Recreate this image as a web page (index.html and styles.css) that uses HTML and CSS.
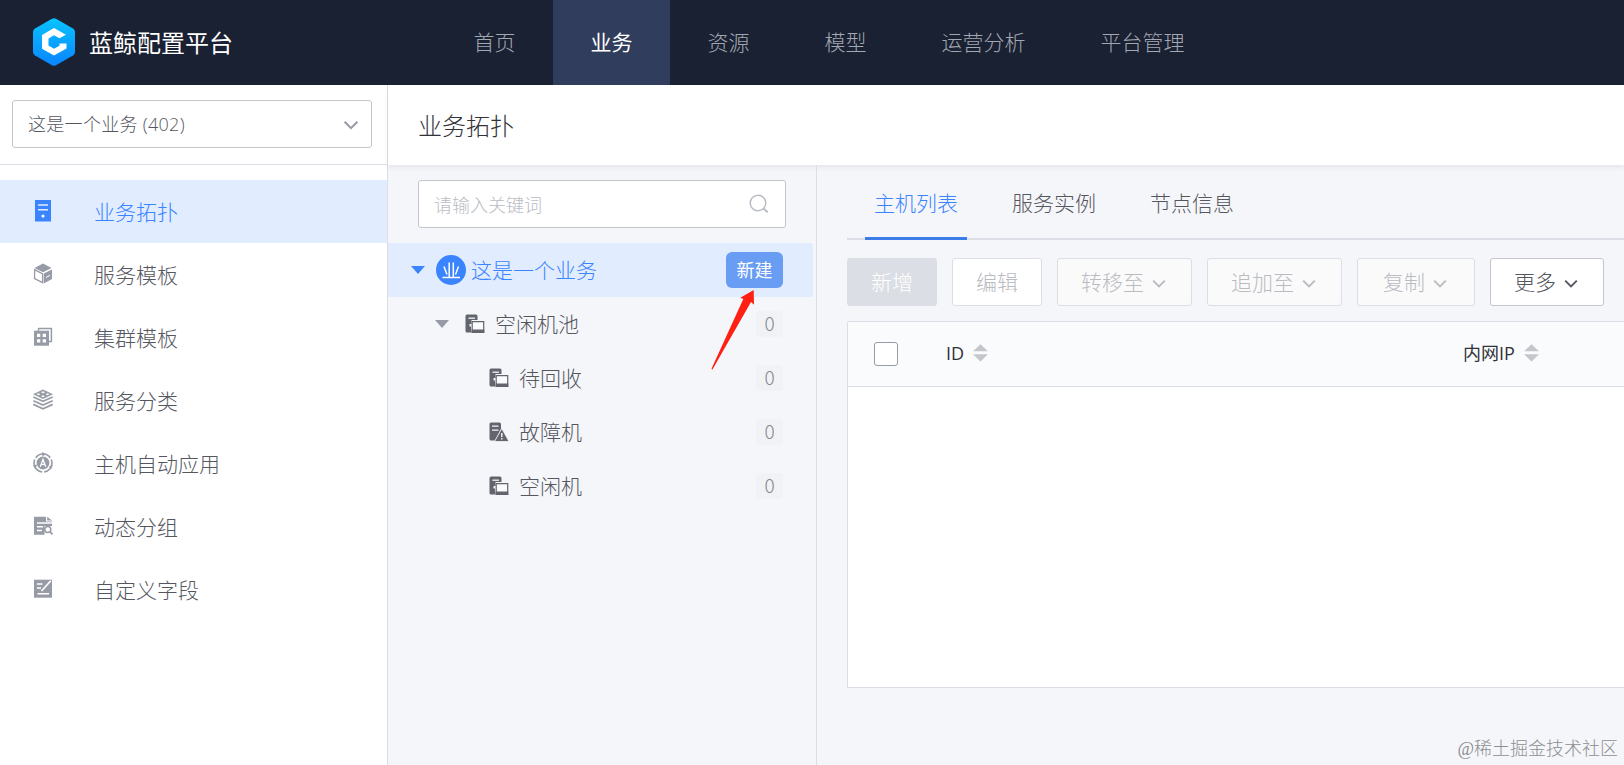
FILE: index.html
```html
<!DOCTYPE html>
<html lang="zh-CN">
<head>
  <meta charset="UTF-8">
  <title>蓝鲸配置平台</title>
  <link rel="stylesheet" href="styles.css">
</head>
<body>
  <svg class="sprite" aria-hidden="true">
    <symbol id="chevron" viewBox="0 0 14 10">
      <path d="M1.2 1.6 L7 7.4 L12.8 1.6" fill="none" stroke="currentColor" stroke-width="1.900"/>
    </symbol>
    <symbol id="sort" viewBox="0 0 15 18">
      <path d="M7.5 0.3 L15 7.3 H0 Z M0 10.3 H15 L7.5 17.5 Z" fill="currentColor"/>
    </symbol>
    <symbol id="idle" viewBox="0 0 20 20">
      <path d="M2 0.5 H11 Q12.5 0.5 12.5 2 V6 H6.5 V10 H4.5 V12.500 H6 V18.500 H2 Q0.500 18.500 0.500 17 V2 Q0.500 0.500 2 0.500 Z" fill="currentColor"/>
      <path d="M3.500 4.200 H10" stroke="#f5f6fa" stroke-width="1.300"/>
      <path d="M7.200 7.700 H18.700 V18.300 H7.200 Z" fill="#fafbfd" stroke="currentColor" stroke-width="1.200"/>
      <path d="M6.600 15.500 H19.300 V19 H6.600 Z" fill="currentColor"/>
    </symbol>
    <symbol id="fault" viewBox="0 0 20 20">
      <path d="M2 0.500 H10.500 Q12 0.500 12 2 V7 L6 18.500 H2 Q0.500 18.500 0.500 17 V2 Q0.500 0.500 2 0.500 Z" fill="currentColor"/>
      <path d="M3 4.200 H9.500 M3 8.200 H9.500" stroke="#f5f6fa" stroke-width="1.200"/>
      <path d="M12.800 6.500 L20 19.500 H5.500 Z" fill="currentColor" stroke="#f5f6fa" stroke-width="0.800"/>
      <path d="M12.800 11 V15 M12.800 16 V17.600" stroke="#f5f6fa" stroke-width="1.400"/>
    </symbol>
  </svg>

  <header class="header">
    <div class="brand">
      <svg class="logo" viewBox="0 0 42 48">
        <defs>
          <linearGradient id="logoFill" x1="0" y1="0" x2="0" y2="1">
            <stop offset="0" stop-color="#08c4ff"/>
            <stop offset="1" stop-color="#0a84ff"/>
          </linearGradient>
        </defs>
        <path d="M19 0.800 Q21 -0.300 23 0.800 L40 10.500 Q42 11.700 42 14 V34 Q42 36.300 40 37.500 L23 47.200 Q21 48.300 19 47.200 L2 37.500 Q0 36.300 0 34 V14 Q0 11.700 2 10.500 Z" fill="url(#logoFill)"/>
        <path d="M21 10 L33 16.800 L26.500 20.300 L21 17.300 L15.500 20.500 V27.500 L21 30.700 L26.500 27.700 V25.500 L33.500 25.500 V30.500 L21 37.500 L9 30.700 V17 Z" fill="#fff"/>
      </svg>
      <span class="brand-name">蓝鲸配置平台</span>
    </div>
    <nav class="nav">
      <a class="nav-item">首页</a>
      <a class="nav-item active">业务</a>
      <a class="nav-item">资源</a>
      <a class="nav-item">模型</a>
      <a class="nav-item">运营分析</a>
      <a class="nav-item">平台管理</a>
    </nav>
  </header>

  <div class="layout">
    <aside class="sidebar">
      <div class="biz">
        <div class="biz-select">
          <span>这是一个业务 (402)</span>
          <svg class="biz-arrow"><use href="#chevron"/></svg>
        </div>
      </div>
      <ul class="menu">
        <li class="menu-item active">
          <svg class="menu-icon" viewBox="0 0 20 22">
            <path d="M2 0 H18 V21.500 H2 Z" fill="currentColor"/>
            <path d="M5 5 H15 M5 9.700 H15" stroke="#e1ecff" stroke-width="1.400"/>
            <circle cx="10" cy="16" r="1.600" fill="#fff"/>
          </svg>
          <span>业务拓扑</span>
        </li>
        <li class="menu-item">
          <svg class="menu-icon" viewBox="0 0 20 22">
            <path d="M10 0.500 L18.500 5 L10 9.300 L1.500 5 Z M10.800 10.600 L19 6.400 V16 L10.800 20.500 Z" fill="currentColor"/>
            <path d="M1.600 6.700 L9.600 10.800 V19.700 L1.600 15.600 Z" fill="#fff" stroke="currentColor" stroke-width="1.300"/>
            <path d="M13 14.500 L17 12.300" stroke="#fff" stroke-width="1"/>
          </svg>
          <span>服务模板</span>
        </li>
        <li class="menu-item">
          <svg class="menu-icon" viewBox="0 0 20 22">
            <path d="M5.500 2.500 H18.400 V15.500" fill="none" stroke="currentColor" stroke-width="1.500"/>
            <path d="M5.500 2 V5 M15.500 15.500 H19" stroke="currentColor" stroke-width="1.300"/>
            <path d="M1 4.700 H16 V19.700 H1 Z" fill="currentColor"/>
            <path d="M4 7.700 H7.300 V11 H4 Z M9.700 7.700 H13 V11 H9.700 Z M4 13.300 H7.300 V16.600 H4 Z M9.700 13.300 H13 V16.600 H9.700 Z" fill="#fff"/>
          </svg>
          <span>集群模板</span>
        </li>
        <li class="menu-item">
          <svg class="menu-icon" viewBox="0 0 20 22">
            <path d="M10 0.500 L20 5.300 L10 10 L0 5.300 Z" fill="currentColor"/>
            <path d="M10 2.200 L12 3.200 L10 4.200 L8 3.200 Z M5.500 4.300 L7.500 5.300 L5.500 6.300 L3.500 5.300 Z M14.500 4.300 L16.500 5.300 L14.500 6.300 L12.500 5.300 Z M10 6.300 L12 7.300 L10 8.300 L8 7.300 Z" fill="#fff"/>
            <path d="M0.300 8 L10 12.300 L19.700 8 M0.300 11.700 L10 16 L19.700 11.700 M0.300 15.400 L10 19.700 L19.700 15.400" fill="none" stroke="currentColor" stroke-width="1.700"/>
          </svg>
          <span>服务分类</span>
        </li>
        <li class="menu-item">
          <svg class="menu-icon" viewBox="0 0 20 22">
            <circle cx="10" cy="11" r="9" fill="none" stroke="currentColor" stroke-width="1.600" stroke-dasharray="16.850 2" stroke-dashoffset="4"/>
            <circle cx="10" cy="11" r="6.400" fill="currentColor"/>
            <path d="M9 0 L13 2 L9.500 4.500 Z M0 13.500 L4 12.500 L2.500 17 Z M19.800 13 L16 14.500 L18 17.500 Z" fill="currentColor"/>
            <path d="M7.300 14.700 L10 7.300 L12.700 14.700 M8.300 12.400 H11.700" fill="none" stroke="#fff" stroke-width="1.300"/>
          </svg>
          <span>主机自动应用</span>
        </li>
        <li class="menu-item">
          <svg class="menu-icon" viewBox="0 0 20 22">
            <path d="M1 1.700 H13 V6.500 H19 V19.700 H1 Z" fill="currentColor"/>
            <path d="M14.200 1.700 L19 5.600 H14.200 Z" fill="currentColor"/>
            <path d="M4 8 H19 M4 11.700 H10 M4 15.500 H9" stroke="#fff" stroke-width="1.400"/>
            <path d="M11.500 20 V11 H20 V20 Z" fill="#fff"/>
            <circle cx="14.800" cy="14.500" r="3" fill="none" stroke="currentColor" stroke-width="1.500"/>
            <path d="M16.800 16.700 L19.500 19.500" stroke="currentColor" stroke-width="1.700"/>
          </svg>
          <span>动态分组</span>
        </li>
        <li class="menu-item">
          <svg class="menu-icon" viewBox="0 0 20 22">
            <path d="M1 1.700 H19 V19.700 H1 Z" fill="currentColor"/>
            <path d="M4 6 H9.500 M4 10 H8 M4.500 15.700 H16" stroke="#fff" stroke-width="1.400"/>
            <path d="M8.500 13 L17.800 2.800" stroke="#fff" stroke-width="1.700"/>
          </svg>
          <span>自定义字段</span>
        </li>
      </ul>
    </aside>

    <main class="main">
      <div class="page-title">业务拓扑</div>
      <div class="content">
        <section class="tree">
          <div class="search">
            <span>请输入关键词</span>
            <svg class="search-icon" viewBox="0 0 20 20">
              <circle cx="9" cy="9" r="7.800" fill="none" stroke="currentColor" stroke-width="1.500"/>
              <path d="M14.500 14.500 L18.700 18.300" stroke="currentColor" stroke-width="2"/>
            </svg>
          </div>
          <div class="node root">
            <i class="caret"></i>
            <svg class="biz-icon" viewBox="0 0 30 30">
              <circle cx="15" cy="15" r="15" fill="#3a84ff"/>
              <path d="M6.500 22.500 H24 M13.200 7.500 V22 M17.300 7.500 V22 M8 11.500 L11 19.500 M22.500 11.500 L19.500 19.500" fill="none" stroke="#fff" stroke-width="1.500"/>
            </svg>
            <span class="node-name">这是一个业务</span>
            <button class="create">新建</button>
          </div>
          <div class="node pool">
            <i class="caret"></i>
            <svg class="node-icon"><use href="#idle"/></svg>
            <span class="node-name">空闲机池</span>
            <span class="count">0</span>
          </div>
          <div class="node leaf">
            <svg class="node-icon"><use href="#idle"/></svg>
            <span class="node-name">待回收</span>
            <span class="count">0</span>
          </div>
          <div class="node leaf">
            <svg class="node-icon"><use href="#fault"/></svg>
            <span class="node-name">故障机</span>
            <span class="count">0</span>
          </div>
          <div class="node leaf">
            <svg class="node-icon"><use href="#idle"/></svg>
            <span class="node-name">空闲机</span>
            <span class="count">0</span>
          </div>
          <svg class="pointer" viewBox="0 0 44 81">
            <path d="M42.700 0 L43 14.700 L40 12 L1.300 79.700 L0.500 78.800 L32.300 9 L29.300 7.700 Z" fill="#ff1f13"/>
          </svg>
        </section>

        <section class="detail">
          <div class="tabs">
            <a class="tab active">主机列表</a>
            <a class="tab">服务实例</a>
            <a class="tab">节点信息</a>
          </div>
          <div class="toolbar">
            <button class="btn primary">新增</button>
            <button class="btn plain">编辑</button>
            <button class="btn">转移至<svg class="btn-arrow"><use href="#chevron"/></svg></button>
            <button class="btn">追加至<svg class="btn-arrow"><use href="#chevron"/></svg></button>
            <button class="btn copy">复制<svg class="btn-arrow"><use href="#chevron"/></svg></button>
            <button class="btn more">更多<svg class="btn-arrow"><use href="#chevron"/></svg></button>
          </div>
          <div class="table">
            <div class="table-head">
              <span class="checkbox"></span>
              <span class="col col-id">ID<svg class="sort"><use href="#sort"/></svg></span>
              <span class="col">内网IP<svg class="sort"><use href="#sort"/></svg></span>
            </div>
          </div>
        </section>
      </div>
    </main>
  </div>
  <div class="watermark">@稀土掘金技术社区</div>
</body>
</html>
```
FILE: styles.css
```css
* {
  box-sizing: border-box;
}

body {
  margin: 0;
  height: 765px;
  overflow: hidden;
  position: relative;
  display: flex;
  flex-direction: column;
  font-family: "Open Sans", "Noto Sans CJK SC", sans-serif;
  font-weight: 300;
  font-size: 21px;
  line-height: 30px;
  color: #55575f;
  background: #f5f6fa;
}

.sprite {
  position: absolute;
  width: 0;
  height: 0;
}

svg {
  display: block;
  flex-shrink: 0;
}

button {
  font: inherit;
  padding: 0;
}

/* header */
.header {
  height: 85px;
  flex-shrink: 0;
  display: flex;
  background: #1a2133;
}

.brand {
  width: 436px;
  padding-left: 33px;
  display: flex;
  align-items: center;
}

.logo {
  width: 42px;
  height: 48px;
  margin-bottom: 1px;
}

.brand-name {
  margin-left: 14px;
  font-size: 24px;
  font-weight: 400;
  color: #fff;
}

.nav {
  display: flex;
}

.nav-item {
  padding: 0 37.5px;
  line-height: 85px;
  color: #a3a7b1;
}

.nav-item.active {
  background: #303d5c;
  color: #fff;
  font-weight: 400;
}

/* sidebar */
.layout {
  flex: 1;
  display: flex;
  min-height: 0;
}

.sidebar {
  width: 388px;
  flex-shrink: 0;
  background: #fff;
  border-right: 1px solid #dcdee5;
}

.biz {
  height: 80px;
  padding: 15px 15px 0 12px;
  border-bottom: 1px solid #dcdee5;
}

.biz-select {
  height: 48px;
  padding: 0 12px 0 15px;
  display: flex;
  align-items: center;
  justify-content: space-between;
  border: 1px solid #c4c6cc;
  border-radius: 3px;
  font-size: 18px;
  letter-spacing: 0.3px;
}

.biz-arrow {
  width: 16px;
  height: 11px;
  margin-top: 2px;
  color: #979ba5;
}

.menu {
  list-style: none;
  margin: 15px 0 0;
  padding: 0;
}

.menu-item {
  height: 63px;
  padding-left: 33px;
  display: flex;
  align-items: center;
}

.menu-item.active {
  background: #e1ecff;
  color: #3a84ff;
}

.menu-icon {
  width: 20px;
  height: 22px;
  margin: 0 41px 2px 0;
  color: #979ba5;
}

.menu-item.active .menu-icon {
  color: #3a84ff;
}

/* main */
.main {
  flex: 1;
  min-width: 0;
  display: flex;
  flex-direction: column;
}

.page-title {
  position: relative;
  height: 80px;
  padding-left: 30px;
  line-height: 81px;
  font-size: 24px;
  color: #313238;
  background: #fff;
  box-shadow: 0 3px 5px rgba(0, 0, 0, 0.06);
}

.content {
  flex: 1;
  display: flex;
}

/* topology tree */
.tree {
  position: relative;
  width: 429px;
  flex-shrink: 0;
  padding: 15px 3px 0 0;
  border-right: 1px solid #dcdee5;
}

.search {
  height: 48px;
  margin: 0 27px 15px 30px;
  padding: 2px 16px 0 15px;
  display: flex;
  align-items: center;
  justify-content: space-between;
  background: #fff;
  border: 1px solid #c4c6cc;
  border-radius: 3px;
  font-size: 18px;
  color: #b9bcc4;
}

.search-icon {
  width: 20px;
  height: 20px;
  margin-bottom: 2px;
}

.node {
  height: 54px;
  padding-right: 30px;
  display: flex;
  align-items: center;
}

.node.root {
  padding-left: 23px;
  background: #e1ecff;
  border-radius: 0 3px 3px 0;
  color: #3a84ff;
}

.node.pool {
  padding-left: 47px;
}

.node.leaf {
  padding-left: 101px;
}

.caret {
  border: 7px solid transparent;
  border-top: 8px solid #979ba5;
  border-bottom: 0;
}

.root .caret {
  border-top-color: #3a84ff;
}

.biz-icon {
  width: 30px;
  height: 30px;
  margin: 0 5px 0 11px;
}

.node-icon {
  width: 20px;
  height: 20px;
  margin-right: 10px;
  color: #63656e;
}

.pool .node-icon {
  margin-left: 16px;
}

.create {
  width: 57px;
  height: 36px;
  margin-left: auto;
  border: 0;
  border-radius: 6px;
  background: #699df4;
  color: #fff;
  font-size: 18px;
  font-weight: 400;
}

.count {
  width: 27px;
  height: 26px;
  margin-left: auto;
  border-radius: 3px;
  background: #f1f2f5;
  color: #85888f;
  font-family: "Noto Sans CJK SC", sans-serif;
  font-size: 19px;
  line-height: 24px;
  text-align: center;
}

.pointer {
  position: absolute;
  left: 323px;
  top: 125px;
  width: 44px;
  height: 81px;
}

/* host list */
.detail {
  flex: 1;
  min-width: 0;
  padding-left: 30px;
}

.tabs {
  height: 75px;
  padding-left: 18px;
  display: flex;
  gap: 36px;
  box-shadow: inset 0 -2px #dcdee5;
}

.tab {
  padding: 0 9px;
  line-height: 76px;
}

.tab.active {
  color: #3a84ff;
  border-bottom: 3px solid #3a7de8;
}

.toolbar {
  margin: 18px 0 15px;
  display: flex;
  gap: 15px;
}

.btn {
  height: 48px;
  padding: 0 23px;
  display: flex;
  align-items: center;
  border: 1px solid #dcdee5;
  border-radius: 3px;
  background: #fafafb;
  color: #b9bbc1;
}

.btn.primary {
  border-color: #dcdee5;
  background: #dcdee5;
  color: #fff;
}

.btn.plain {
  background: #fff;
}

.btn.copy {
  padding: 0 25px;
}

.btn.more {
  border-color: #c4c6cc;
  background: #fff;
  color: #55575f;
}

.btn-arrow {
  width: 14px;
  height: 10px;
  margin: 4px 2px 0 8px;
}

.table {
  height: 367px;
  border: 1px solid #dcdee5;
  border-right: 0;
  border-radius: 3px 0 0 0;
  background: #fff;
}

.table-head {
  height: 65px;
  padding-left: 26px;
  display: flex;
  align-items: center;
  background: #fafbfd;
  border-bottom: 1px solid #dcdee5;
  font-size: 18px;
  font-weight: 400;
  color: #313238;
}

.checkbox {
  width: 24px;
  height: 24px;
  margin-right: 48px;
  border: 1px solid #979ba5;
  border-radius: 3px;
  background: #fff;
}

.col {
  display: flex;
  align-items: center;
  margin-bottom: 2px;
}

.col-id {
  width: 517px;
}

.sort {
  width: 15px;
  height: 18px;
  margin-left: 9px;
  color: #c4c6cc;
}

.watermark {
  position: absolute;
  right: 6px;
  bottom: 1px;
  font-family: "Liberation Serif", "Noto Sans CJK SC", serif;
  font-size: 18px;
  color: #8d8e90;
}
```
